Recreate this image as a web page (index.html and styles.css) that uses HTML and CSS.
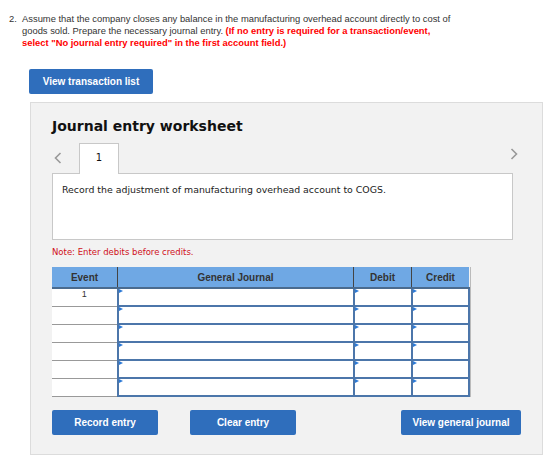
FILE: index.html
```html
<!DOCTYPE html>
<html lang="en">
<head>
    <meta charset="UTF-8">
    <meta name="viewport" content="width=device-width, initial-scale=1.0">
    <title>Journal entry worksheet</title>
    <link rel="stylesheet" href="styles.css">
</head>
<body>
    <div class="question">
        <span class="qnum">2.</span>
        <p class="qtext"><span>Assume that the company closes any balance in the manufacturing overhead account directly to cost of goods sold. Prepare the necessary journal entry.</span> <b class="warn">(If no entry is required for a transaction/event, select "No journal entry required" in the first account field.)</b></p>
    </div>
    <button class="btn btn-list">View transaction list</button>

    <div class="worksheet">
        <h2>Journal entry worksheet</h2>
        <div class="tabs">
            <svg class="arrow" width="8" height="12" viewBox="0 0 8 12"><path d="M6.5 1 L1.5 6 L6.5 11" fill="none" stroke="#999" stroke-width="1.6"/></svg>
            <div class="tab">1</div>
            <svg class="arrow arrow-next" width="8" height="12" viewBox="0 0 8 12"><path d="M1.5 1 L6.5 6 L1.5 11" fill="none" stroke="#999" stroke-width="1.6"/></svg>
        </div>
        <div class="desc">Record the adjustment of manufacturing overhead account to COGS.</div>
        <p class="note">Note: Enter debits before credits.</p>

        <table class="journal">
            <thead>
                <tr>
                    <th class="c-event">Event</th>
                    <th class="c-acct">General Journal</th>
                    <th class="c-amt">Debit</th>
                    <th class="c-amt">Credit</th>
                </tr>
            </thead>
            <tbody>
                <tr><td class="ev">1</td><td class="in"></td><td class="in"></td><td class="in"></td></tr>
                <tr><td class="ev"></td><td class="in"></td><td class="in"></td><td class="in"></td></tr>
                <tr><td class="ev"></td><td class="in"></td><td class="in"></td><td class="in"></td></tr>
                <tr><td class="ev"></td><td class="in"></td><td class="in"></td><td class="in"></td></tr>
                <tr><td class="ev"></td><td class="in"></td><td class="in"></td><td class="in"></td></tr>
                <tr><td class="ev"></td><td class="in"></td><td class="in"></td><td class="in"></td></tr>
            </tbody>
        </table>

        <div class="actions">
            <button class="btn btn-record">Record entry</button>
            <button class="btn btn-clear">Clear entry</button>
            <button class="btn btn-view">View general journal</button>
        </div>
    </div>
</body>
</html>
```

FILE: styles.css
```css
html {
    font-family: 'Liberation Sans', Arial, sans-serif;
}
body{
    margin: 0;
    background: #fff;
    color: #333;
}
.question{
    display: flex;
    padding: 13px 0 0 9px;
    font-size: 9.4px;
    line-height: 12px;
    width: 450px;
}
.qnum{
    width: 13px;
    flex: none;
}
.qtext{
    margin: 0;
}
.warn{
    color: #f00;
}
.btn{
    background-color: #2f6ebc;
    color: white;
    border: none;
    border-radius: 2px;
    font-family: 'Liberation Sans', Arial, sans-serif;
    font-weight: bold;
    font-size: 10px;
    height: 25px;
    padding: 0;
}
.btn-list{
    display: block;
    margin: 20px 0 0 29px;
    width: 124px;
}
.worksheet{
    margin: 8px 0 0 30px;
    width: 490px;
    height: 351px;
    padding: 0 0 0 21px;
    background: #f2f2f2;
    border: 1px solid #dcdcdc;
}
.worksheet h2{
    font-family: 'DejaVu Sans', Verdana, sans-serif;
    font-size: 14px;
    margin: 15px 0 0;
    color: #111;
}
.tabs{
    display: flex;
    align-items: flex-end;
    margin-top: 8px;
    height: 31px;
    width: 466px;
}
.arrow{
    align-self: center;
    margin: 0 17px 0 2px;
}
.arrow-next{
    margin: -8px 0 0 auto;
}
.tab{
    width: 38px;
    height: 30px;
    background: #fff;
    border: 1px solid #c8c8c8;
    border-bottom: none;
    text-align: center;
    font-family: 'DejaVu Sans', Verdana, sans-serif;
    font-size: 10px;
    line-height: 28px;
    color: #111;
    margin-bottom: -1px;
    position: relative;
}
.desc{
    width: 450px;
    height: 65px;
    background: #fff;
    border: 1px solid #c8c8c8;
    padding: 0 0 0 9px;
    font-family: 'DejaVu Sans', Verdana, sans-serif;
    font-size: 9.4px;
    line-height: 31px;
    color: #222;
}
.note{
    font-family: 'DejaVu Sans', Verdana, sans-serif;
    font-size: 8.5px;
    color: #d0101b;
    margin: 7px 0 0;
}
.journal{
    border-collapse: collapse;
    margin-top: 10px;
    width: 414px;
    table-layout: fixed;
    box-shadow: 1px 0 0 #bbb;
}
.journal th{
    background: #6fa8e4;
    height: 20px;
    font-size: 10px;
    font-weight: bold;
    color: #333;
    padding: 0;
    border-left: 1px solid #444;
    border-bottom: 2px solid #4a6b8f;
}
.journal th:first-child{
    border-left: none;
}
.c-event{ width: 65px; }
.c-acct{ width: 235px; }
.c-amt{ width: 57px; }
.journal td{
    height: 16px;
    padding: 0;
    background: #fff;
}
.ev{
    text-align: center;
    font-size: 9px;
    vertical-align: top;
    padding-top: 2px;
    border-bottom: 1px solid #999;
    border-right: 2px solid #4c76aa;
}
.in{
    border: 2px solid #4c76aa;
    position: relative;
}
/* small pointer mark at the corner of each entry cell */
.in::before{
    content: "";
    position: absolute;
    left: 0;
    top: 0;
    border-left: 4px solid #2d7ad6;
    border-top: 2px solid transparent;
    border-bottom: 2px solid transparent;
}
.actions{
    display: flex;
    margin-top: 13px;
    width: 469px;
}
.btn-record, .btn-clear{
    width: 106px;
    margin-right: 32px;
}
.btn-view{
    width: 120px;
    margin-left: auto;
}
```
